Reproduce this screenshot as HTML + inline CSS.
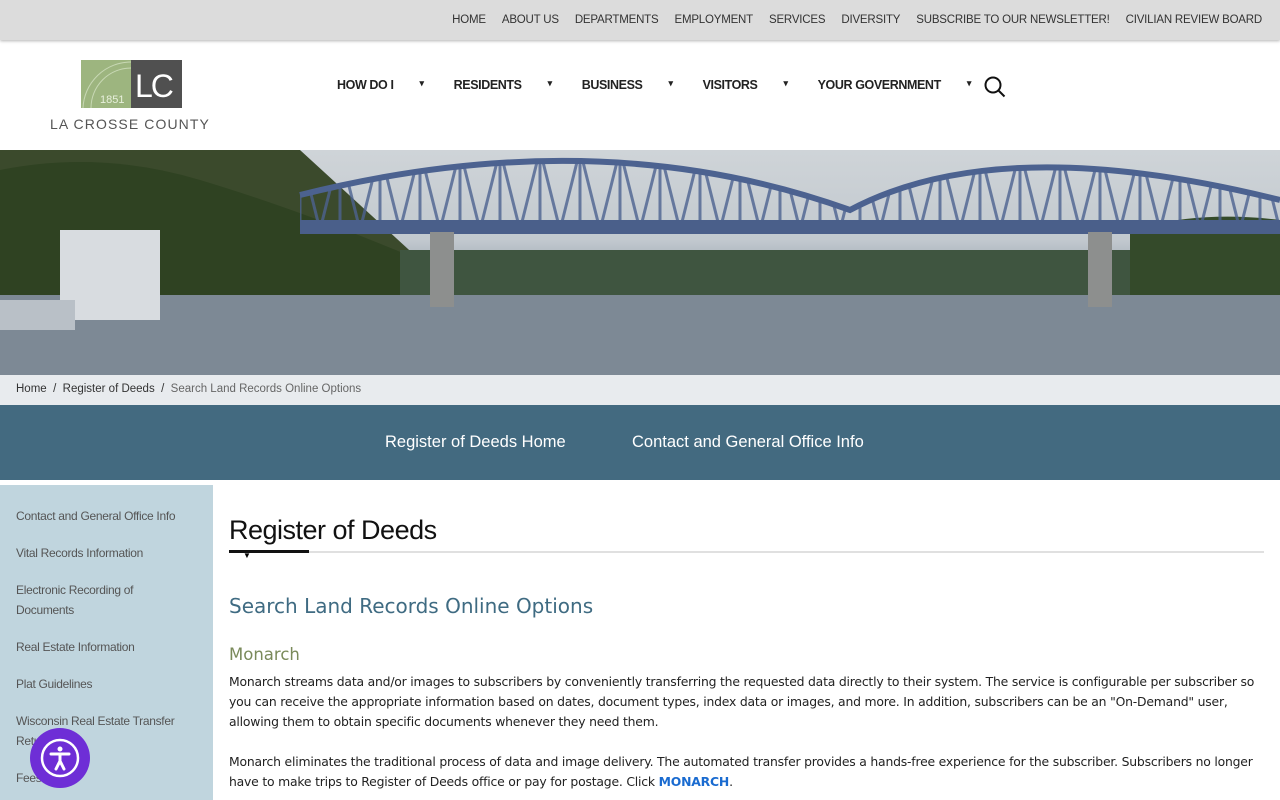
<!DOCTYPE html>
<html><head><meta charset="utf-8"><style>
*{margin:0;padding:0;box-sizing:border-box}
body{width:1280px;height:800px;overflow:hidden;font-family:"Liberation Sans",sans-serif;background:#fff;position:relative}
.top{height:40px;background:#dcdcdc;display:flex;justify-content:flex-end;align-items:center;padding-right:10px;box-shadow:0 1px 3px rgba(0,0,0,.3);position:relative;z-index:2}
.top a{font-size:11.5px;color:#333;margin:0 8px;text-decoration:none;letter-spacing:-.2px}
.hdr{height:110px;position:relative}
.logo{position:absolute;left:81px;top:20px;width:101px;height:48px}
.lname{position:absolute;left:50px;top:76px;font-size:14px;letter-spacing:1.1px;color:#555}
.nav{position:absolute;top:38px;left:337px;display:flex;font-size:12.5px;font-weight:bold;color:#222;letter-spacing:-.4px}
.nav span{margin-right:26px}
.nav i{font-style:normal;margin-right:30px;font-size:9px}
.hero{position:absolute;top:150px;left:0;width:1280px;height:225px;overflow:hidden;background:linear-gradient(#cfd4d8 0%,#c2c9cf 40%,#8e9aa5 60%,#7e8a96 75%,#8a929c 100%)}
.bc{position:absolute;top:375px;left:0;width:1280px;height:30px;background:#e8ebee;font-size:11.5px;color:#333;padding:8px 16px}
.bc span{color:#666}
.band{position:absolute;top:405px;left:0;width:1280px;height:75px;background:#436a80;color:#fff;font-size:16.5px}
.side{position:absolute;top:485px;left:0;width:213px;height:315px;background:#c0d5de;font-size:12px;color:#555;padding:21px 16px;letter-spacing:-.3px}
.side div{margin-bottom:17px;line-height:20px;width:160px}
.main{position:absolute;left:229px;top:485px;width:1035px}
h1{font-weight:normal;font-size:27px;color:#111;margin-top:30px;letter-spacing:-.5px}
.rule{height:2px;background:#e0e0e0;margin-top:5px;position:relative}
.rule:before{content:"";position:absolute;left:0;top:-1px;width:80px;height:3px;background:#111}
h2{font-family:"DejaVu Sans",sans-serif;font-weight:normal;font-size:20px;color:#3f6b82;margin-top:35px}
h3{font-family:"DejaVu Sans",sans-serif;font-weight:normal;font-size:16.5px;color:#7a8a5a;margin-top:27px}
p{font-family:"DejaVu Sans",sans-serif;font-size:12.4px;color:#222;line-height:20px;margin-top:8px;letter-spacing:-.2px}
.acc{position:absolute;left:30px;top:728px;width:60px;height:60px;border-radius:50%;background:#6e2ed6}
</style></head><body>
<div class="top"><a>HOME</a><a>ABOUT US</a><a>DEPARTMENTS</a><a>EMPLOYMENT</a><a>SERVICES</a><a>DIVERSITY</a><a>SUBSCRIBE TO OUR NEWSLETTER!</a><a>CIVILIAN REVIEW BOARD</a></div>
<div class="hdr">
<svg class="logo" viewBox="0 0 101 48"><rect width="50" height="48" fill="#9db57f"/><rect x="50" width="51" height="48" fill="#505050"/><path d="M2 48 A48 48 0 0 1 50 2" stroke="#c8d8b4" fill="none"/><path d="M10 48 A40 40 0 0 1 50 8" stroke="#c8d8b4" fill="none"/><text x="19" y="43" font-size="11" fill="#e8f0dc" font-family="Liberation Sans">1851</text><text x="54" y="37" font-size="32" fill="#fff" font-family="Liberation Sans" letter-spacing="-2">LC</text></svg>
<div class="lname">LA CROSSE COUNTY</div>
<div class="nav"><span>HOW DO I</span><i>▾</i><span>RESIDENTS</span><i>▾</i><span>BUSINESS</span><i>▾</i><span>VISITORS</span><i>▾</i><span>YOUR GOVERNMENT</span><i>▾</i></div>
<svg style="position:absolute;left:984px;top:36px" width="22" height="22" viewBox="0 0 22 22"><circle cx="9" cy="9" r="7.5" stroke="#111" stroke-width="2" fill="none"/><path d="M14.5 14.5 L20.5 20.5" stroke="#111" stroke-width="2"/></svg>
</div>
<div class="hero"><svg width="1280" height="225">
<defs><pattern id="tr" width="40" height="80" patternUnits="userSpaceOnUse"><path d="M0 80 L20 0 L40 80 M20 0 V80" stroke="#4c6290" stroke-width="3" fill="none"/></pattern></defs>
<path d="M0 0 H300 L420 110 V160 H0Z" fill="#3b4a2c"/>
<path d="M0 20 Q100 0 200 30 T420 110 V160 H0Z" fill="#2f4222"/>
<rect x="400" y="100" width="880" height="45" fill="#3f5540"/>
<path d="M1130 80 Q1200 60 1280 70 V150 H1130Z" fill="#344a2a"/>
<rect x="0" y="145" width="1280" height="80" fill="#7d8995"/>
<path d="M300 72 L300 45 Q600 -30 850 60 Q1000 -20 1280 50 V72Z" fill="url(#tr)" opacity=".8"/>
<path d="M300 45 Q600 -30 850 60 Q1000 -20 1280 50" stroke="#4c6290" stroke-width="6" fill="none"/>
<rect x="300" y="70" width="980" height="14" fill="#4a5f8a"/>
<rect x="430" y="82" width="24" height="75" fill="#8d8f8e"/><rect x="1088" y="82" width="24" height="75" fill="#8d8f8e"/>
<rect x="60" y="80" width="100" height="90" fill="#d8dce0"/><rect x="0" y="150" width="75" height="30" fill="#b9c0c7"/>
</svg></div>
<div class="bc">Home &nbsp;/&nbsp; Register of Deeds &nbsp;/&nbsp; <span>Search Land Records Online Options</span></div>
<div class="band"><span style="position:absolute;left:385px;top:28px">Register of Deeds Home</span><span style="position:absolute;left:632px;top:28px">Contact and General Office Info</span></div>
<div class="side"><div>Contact and General Office Info</div><div>Vital Records Information</div><div style="width:130px">Electronic Recording of Documents</div><div>Real Estate Information</div><div>Plat Guidelines</div><div>Wisconsin Real Estate Transfer Return</div><div>Fees</div></div>
<div class="main">
<h1>Register of Deeds</h1><div class="rule"></div><div style="margin-left:14px;font-size:8px;line-height:6px">▼</div>
<h2>Search Land Records Online Options</h2>
<h3>Monarch</h3>
<p>Monarch streams data and/or images to subscribers by conveniently transferring the requested data directly to their system. The service is configurable per subscriber so you can receive the appropriate information based on dates, document types, index data or images, and more. In addition, subscribers can be an "On-Demand" user, allowing them to obtain specific documents whenever they need them.</p>
<p style="margin-top:20px">Monarch eliminates the traditional process of data and image delivery. The automated transfer provides a hands-free experience for the subscriber. Subscribers no longer have to make trips to Register of Deeds office or pay for postage. Click <b style="color:#1a6bd0">MONARCH</b>.</p>
</div>
<div class="acc"><svg width="60" height="60" viewBox="0 0 60 60"><circle cx="30" cy="30" r="18" stroke="#fff" stroke-width="2.5" fill="none"/><circle cx="30" cy="21" r="2.5" fill="#fff"/><path d="M21 26 L39 26 M30 26 V33 L26 41 M30 33 L34 41" stroke="#fff" stroke-width="3" fill="none" stroke-linecap="round"/></svg></div>
</body></html>
